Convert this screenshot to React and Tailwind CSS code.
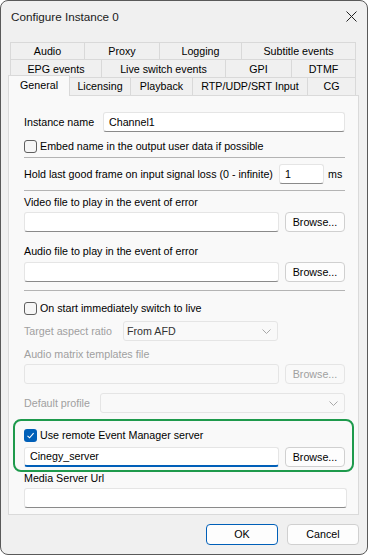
import React from "react";

const rowTabs1 = [
  ["Audio", "w-[75px]"],
  ["Proxy", "w-[76px]"],
  ["Logging", "w-[83px]"],
  ["Subtitle events", "w-[115px]"],
];
const rowTabs2 = [
  ["EPG events", "w-[92px]"],
  ["Live switch events", "w-[125px]"],
  ["GPI", "w-[67px]"],
  ["DTMF", "w-[65px]"],
];
const rowTabs3 = [
  ["Licensing", "w-[62px]"],
  ["Playback", "w-[63px]"],
  ["RTP/UDP/SRT Input", "w-[116px]"],
  ["CG", "w-[49px]"],
];

function Tab({ label, width, height }) {
  return (
    <div
      className={`${width} ${height} -ml-px first:ml-0 border border-b-0 border-[#d9d9d9] bg-[#f0f0f0] flex items-center justify-center text-black`}
    >
      {label}
    </div>
  );
}

function Checkbox({ checked }) {
  if (checked) {
    return (
      <span className="w-[13px] h-[13px] rounded-[3px] bg-[#005fb8] flex items-center justify-center shrink-0">
        <svg width="9" height="9" viewBox="0 0 9 9">
          <polyline points="1.5,4.8 3.6,6.8 7.6,2.2" fill="none" stroke="#fff" strokeWidth="1.1" />
        </svg>
      </span>
    );
  }
  return <span className="w-[13px] h-[13px] rounded-[3px] border border-[#5f5f5f] bg-[#f6f6f6] shrink-0" />;
}

function TextBox({ value, className = "", disabled, focused }) {
  return (
    <div
      className={`h-[20px] rounded-[3px] border flex items-center px-[5px] ${
        disabled
          ? "bg-[#f9f9f9] border-[#e5e5e5]"
          : focused
          ? "bg-white border-[#e5e5e5] border-b-2 border-b-[#005fb8]"
          : "bg-white border-[#e5e5e5] border-b-[#8a8a8a]"
      } ${className}`}
    >
      {value}
    </div>
  );
}

function Browse({ disabled }) {
  return (
    <div
      className={`w-[60px] h-[20px] ml-[6px] shrink-0 rounded-[4px] border flex items-center justify-center ${
        disabled ? "bg-[#f9f9f9] border-[#e5e5e5] text-[#a0a0a0]" : "bg-[#fdfdfd] border-[#d0d0d0] text-black"
      }`}
    >
      Browse...
    </div>
  );
}

function Chevron() {
  return (
    <svg width="9" height="5" viewBox="0 0 9 5" className="shrink-0">
      <polyline points="0.5,0.5 4.5,4.5 8.5,0.5" fill="none" stroke="#a8a8a8" strokeWidth="1" />
    </svg>
  );
}

function Separator({ className = "" }) {
  return <div className={`h-px bg-[#b4b4b4] ${className}`} />;
}

export default function App() {
  return (
    <div className="w-[368px] h-[555px] bg-[#f0f0f0] border border-[#595959] rounded-[8px] overflow-hidden flex flex-col font-['Liberation_Sans',Arial,sans-serif] text-[10.7px] text-black">
      {/* TITLE BAR */}
      <div className="h-[31px] shrink-0 flex items-center justify-between pl-[10px] pr-[10px]">
        <span className="text-[11.7px] text-[#1a1a1a] pt-[1px]">Configure Instance 0</span>
        <svg width="11" height="11" viewBox="0 0 11 11">
          <path d="M0.5 0.5 L10.5 10.5 M10.5 0.5 L0.5 10.5" stroke="#222" strokeWidth="1" />
        </svg>
      </div>

      {/* TABS */}
      <div className="mt-[10px] flex flex-col">
        <div className="flex ml-[9px]">
          {rowTabs1.map(([l, w]) => (
            <Tab key={l} label={l} width={w} height="h-[18px]" />
          ))}
        </div>
        <div className="flex ml-[9px] -mt-px">
          {rowTabs2.map(([l, w]) => (
            <Tab key={l} label={l} width={w} height="h-[19px]" />
          ))}
        </div>
        <div className="flex ml-[7px] -mt-[3px] items-end">
          <div className="w-[62px] h-[21px] border border-b-0 border-[#d9d9d9] bg-[#f9f9f9] relative z-10 -mb-px flex items-center justify-center pb-[1px]">
            General
          </div>
          {rowTabs3.map(([l, w]) => (
            <Tab key={l} label={l} width={w} height="h-[18px]" />
          ))}
        </div>
      </div>

      {/* PANEL */}
      <div className="ml-[7px] w-[351px] h-[420px] border border-[#dadada] bg-[#f9f9f9] pl-[15px] pr-[13px] pt-[16px] flex flex-col">
        <div className="h-[20px] flex items-center">
          <span className="w-[79px]">Instance name</span>
          <TextBox value="Channel1" className="flex-1" />
        </div>
        <label className="mt-[6px] h-[16px] flex items-center gap-[3px]">
          <Checkbox />
          <span>Embed name in the output user data if possible</span>
        </label>
        <Separator className="mt-[3px]" />
        <div className="mt-[6px] h-[20px] flex items-center">
          <span className="flex-1 min-w-0 whitespace-nowrap">Hold last good frame on input signal loss (0 - infinite)</span>
          <TextBox value="1" className="w-[45px] shrink-0" />
          <span className="w-[21px] shrink-0 pl-[4px]">ms</span>
        </div>
        <Separator className="mt-[6px]" />
        <div className="mt-[4px] h-[14px] leading-[14px]">Video file to play in the event of error</div>
        <div className="mt-[3px] flex">
          <TextBox className="flex-1" />
          <Browse />
        </div>
        <div className="mt-[12px] h-[14px] leading-[14px]">Audio file to play in the event of error</div>
        <div className="mt-[4px] flex">
          <TextBox className="flex-1" />
          <Browse />
        </div>
        <Separator className="mt-[8px]" />
        <label className="mt-[9px] h-[16px] flex items-center gap-[3px]">
          <Checkbox />
          <span>On start immediately switch to live</span>
        </label>
        <div className="mt-[5px] h-[20px] flex items-center">
          <span className="w-[99px] text-[#a0a0a0]">Target aspect ratio</span>
          <div className="w-[155px] h-[20px] rounded-[3px] border border-[#e5e5e5] bg-[#f9f9f9] flex items-center justify-between pl-[3px] pr-[6px] text-[#333]">
            <span>From AFD</span>
            <Chevron />
          </div>
        </div>
        <div className="mt-[6px] h-[14px] leading-[14px] text-[#a0a0a0]">Audio matrix templates file</div>
        <div className="mt-[3px] flex">
          <TextBox className="flex-1" disabled />
          <Browse disabled />
        </div>
        <div className="mt-[9px] h-[20px] flex items-center">
          <span className="w-[76px] text-[#a0a0a0]">Default profile</span>
          <div className="flex-1 h-[20px] rounded-[3px] border border-[#e5e5e5] bg-[#f9f9f9] flex items-center justify-end pr-[6px]">
            <Chevron />
          </div>
        </div>

        {/* HIGHLIGHTED GROUP */}
        <div className="mt-[6px] -ml-[11px] -mr-[9px] border-2 border-[#1e9a4c] rounded-[8px] pl-[9px] pr-[7px] pt-[6px] pb-[3px] flex flex-col">
          <label className="h-[16px] flex items-center gap-[3px]">
            <Checkbox checked />
            <span>Use remote Event Manager server</span>
          </label>
          <div className="mt-[4px] flex">
            <TextBox value="Cinegy_server" className="flex-1" focused />
            <Browse />
          </div>
        </div>

        <div className="h-[12px] leading-[12px]">Media Server Url</div>
        <div className="mt-[4px] -mr-[2px]">
          <TextBox />
        </div>
      </div>

      {/* BUTTONS */}
      <div className="mt-[9px] flex justify-end gap-[9px] pr-[8px]">
        <div className="w-[72px] h-[21px] rounded-[4px] border border-[#005fb8] bg-[#fdfdfd] flex items-center justify-center">
          OK
        </div>
        <div className="w-[72px] h-[21px] rounded-[4px] border border-[#d0d0d0] bg-[#fdfdfd] flex items-center justify-center">
          Cancel
        </div>
      </div>
    </div>
  );
}
